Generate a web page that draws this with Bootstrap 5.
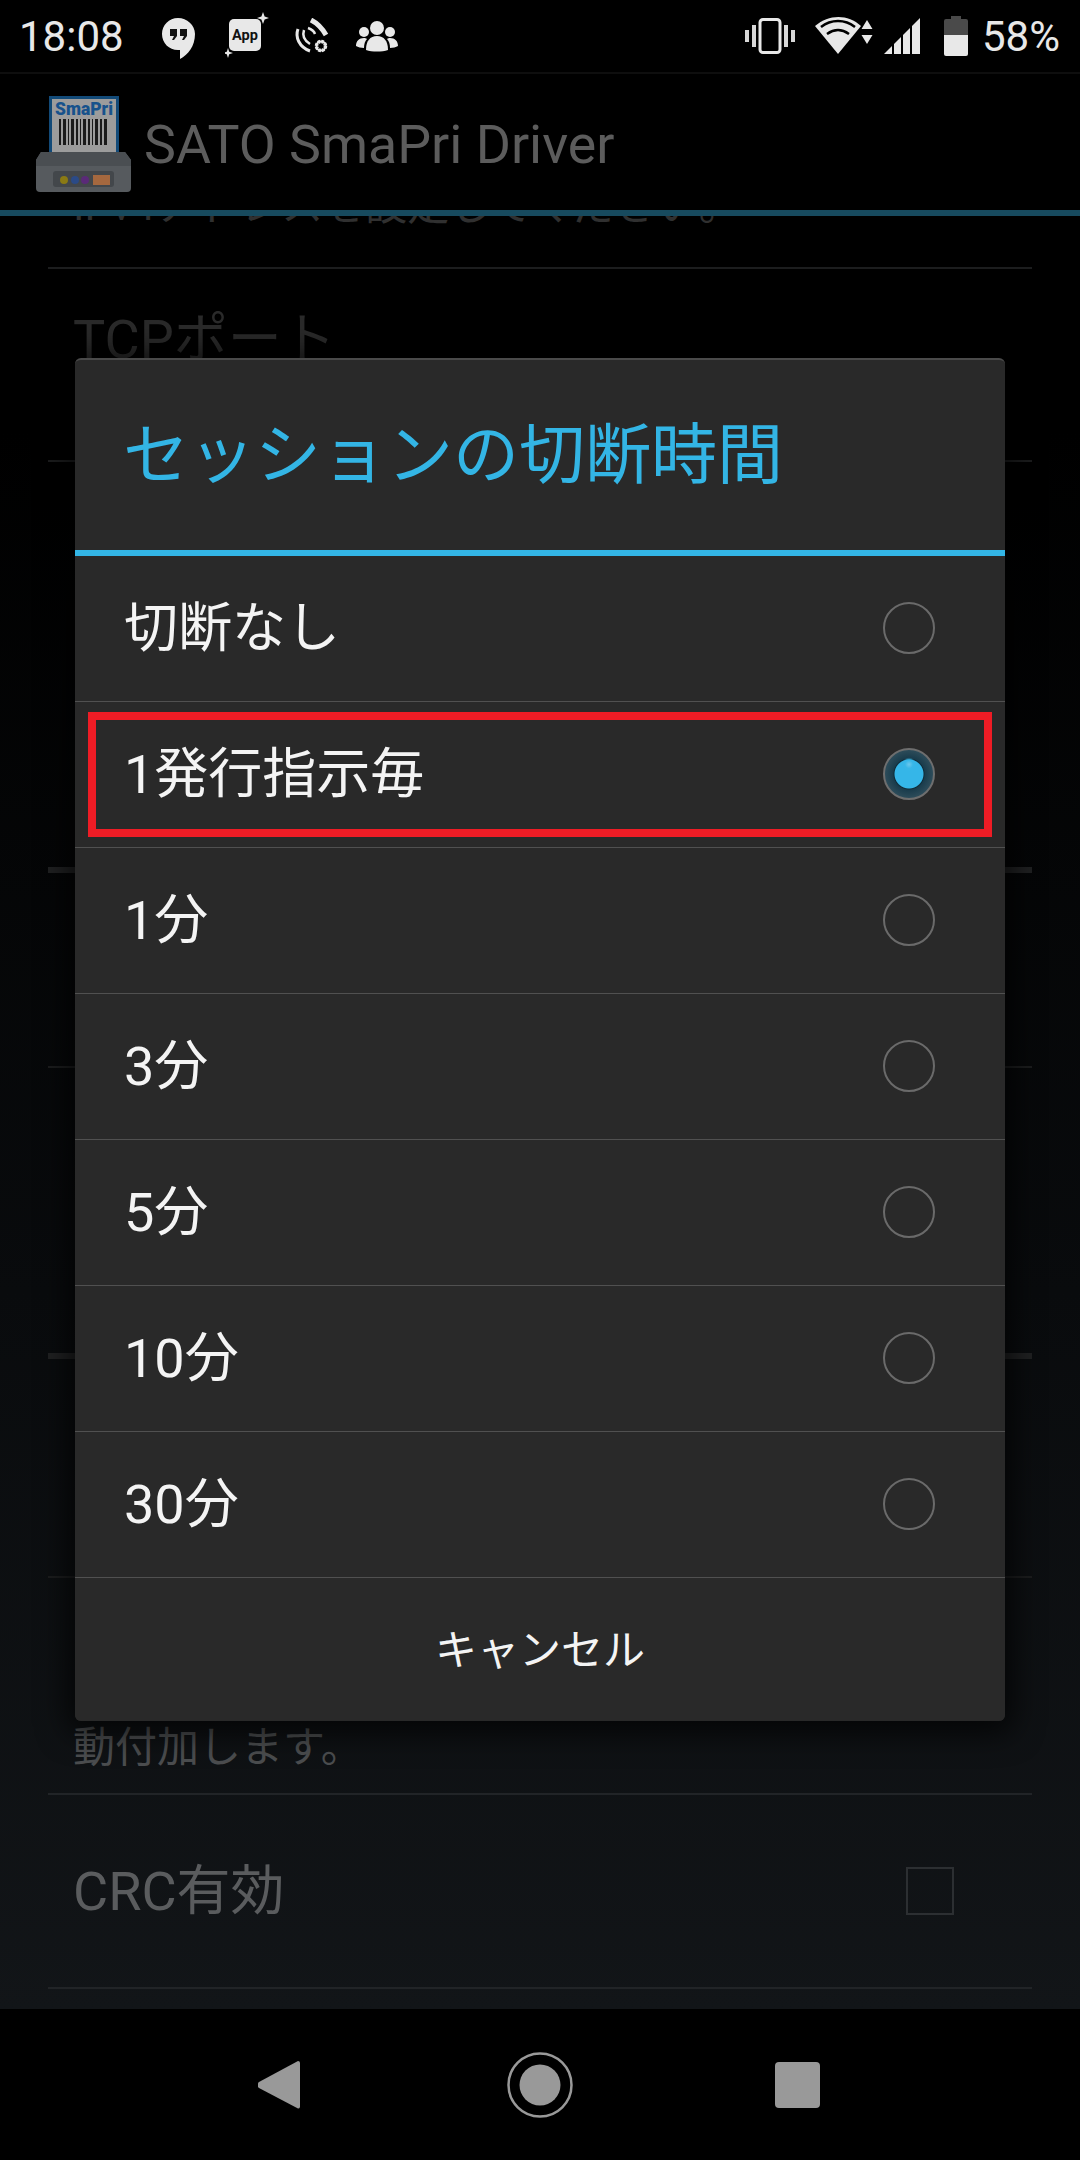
<!DOCTYPE html>
<html lang="ja">
<head>
    <meta charset="UTF-8">
    <meta name="viewport" content="width=device-width, initial-scale=1.0">
    <title>SATO SmaPri Driver</title>
    <link rel="stylesheet" href="https://cdn.jsdelivr.net/npm/bootstrap@5.3.0/dist/css/bootstrap.min.css">
    <style>
        body { background: #000; font-family: Roboto, "Noto Sans CJK JP", sans-serif; }
        .phone { width: 1080px; height: 2160px; background: #000; }

        .status-bar { height: 74px; border-bottom: 2px solid #0e0e0e; padding: 0 20px; color: #e8e8e8; font-size: 42px; line-height: 1; }
        .status-bar svg { display: block; flex: none; }
        .clock { width: 140px; margin-top: 2px; margin-left: -1px; }
        .pct { margin-left: 14px; margin-top: 2px; }
        .ic-hang { width: 40px; margin-top: 4px; }
        .ic-app { width: 44px; margin-left: 26px; }
        .ic-call { width: 36px; margin-left: 24px; }
        .ic-group { width: 42px; margin-left: 27px; }
        .ic-vib { width: 50px; }
        .ic-wifi { width: 60px; margin-left: 20px; }
        .ic-sig { width: 36px; margin-left: 9px; }
        .ic-bat { width: 24px; margin-left: 24px; }

        .action-bar { height: 142px; border-bottom: 6px solid #174a5e; padding-left: 35px; }
        .action-bar svg { margin-top: 4px; }
        .app-title { margin-left: 13px; margin-top: 6px; font-size: 53.7px; color: #5c5c5c; line-height: 1; }

        .settings { height: 1793px; background: linear-gradient(180deg, #000 0%, #000 12%, #090b0d 60%, #121518 100%); padding: 0 48px; }
        .scroll-list { margin-top: -40px; }
        .pref { border-bottom: 2px solid #1c1d1e; padding-left: 25px; }
        .pref-thick { border-bottom: 6px solid #202122; }
        .pref-hint { height: 93px; padding-top: 6px; font-size: 42px; line-height: 48px; color: #303030; }
        .pref-tcp { height: 193px; padding-top: 40px; font-size: 54px; line-height: 62px; color: #2a2a2a; }
        .pref-h1 { height: 411px; }
        .pref-h2 { height: 195px; }
        .pref-h3 { height: 291px; }
        .pref-h4 { height: 219px; }
        .pref-note { height: 217px; padding-bottom: 21px; font-size: 42px; line-height: 48px; color: #4b4d4f; border-color: #212427; }
        .pref-crc { height: 194px; padding-right: 78px; font-size: 54px; color: #5a5c5e; border-color: #212427; }
        .pref-box[type=checkbox] { width: 48px; height: 48px; margin: 0; background-color: transparent; border: 2px solid #2c2f32; border-radius: 0; }

        .nav-bar { height: 151px; background: #000; padding-left: 258px; }
        .nav-home { margin-left: 207px; }
        .nav-recent { margin-left: 202px; }

        .time-dialog { left: 75px; top: 358px; width: 930px; background: #292929; border-radius: 6px; border-top: 2px solid #4a4a4a; box-shadow: 0 4px 30px 8px rgba(0, 0, 0, .7); overflow: hidden; }
        .dialog-title { height: 196px; padding-left: 48px; padding-top: 2px; font-size: 66px; line-height: 1; color: #33b5e5; border-bottom: 6px solid #33b5e5; }
        .time-row { height: 146px; padding: 0 70px 0 49px; background: #292929; color: #f4f4f4; font-size: 54px; border: 0; border-bottom: 2px solid #505050; border-radius: 0 !important; }
        .time-row.list-group-item:last-child { border-bottom: 0; }
        .cancel-row { height: 143px; padding: 2px 0 0; justify-content: center; font-size: 42px; text-align: center; }
        .cancel-row:hover { background: #292929; color: #f4f4f4; }
        .mark-box { position: absolute; top: 10px; right: 13px; bottom: 10px; left: 13px; border: 8px solid #ee1c25; pointer-events: none; }
        .pick-radio { flex: none; width: 52px; height: 52px; margin: -2px 0 0; background-color: transparent; border: 2px solid #6a6a6a; }
        .pick-radio:checked[type=radio] { background-color: transparent; border-color: #6e6e6e; background-image: radial-gradient(circle at 50% 30%, #6cc8ec 0, #38b7e8 4px, rgba(56, 183, 232, 0) 7px), radial-gradient(circle at 50% 50%, #35b6e8 0, #35b6e8 14px, #0f2a36 15px, #1a3c4c 16px, #2d4c5a 24px); }
    </style>
</head>
<body>
    <div class="phone position-relative overflow-hidden d-flex flex-column">

        <div class="status-bar d-flex align-items-center">
            <div class="clock">18:08</div>
            <svg class="ic-hang" height="44" viewBox="0 0 40 44">
                <path d="M19 2C10 2 3 9 3 18s7 16 16 16h2v9c8-4 15-13 15-25C36 9 28 2 19 2z" fill="#e8e8e8"/>
                <path d="M11 13h7v7l-3 4h-2l2-4h-4zM21 13h7v7l-3 4h-2l2-4h-4z" fill="#111"/>
            </svg>
            <svg class="ic-app" height="48" viewBox="0 0 44 48">
                <rect x="4" y="7" width="32" height="32" rx="5" fill="#e8e8e8"/>
                <text x="20" y="28" text-anchor="middle" font-family="Roboto, sans-serif" font-weight="700" font-size="14.5" fill="#111">App</text>
                <path d="M38 0l1.600 4.400L44 6l-4.400 1.600L38 12l-1.600-4.400L32 6l4.400-1.600zM3 36l1.200 3.800L8 41l-3.800 1.200L3 46l-1.200-3.800L-2 41l3.800-1.200z" fill="#e8e8e8"/>
            </svg>
            <svg class="ic-call" height="36" viewBox="0 0 36 36" fill="none" stroke="#e8e8e8">
                <path d="M18 2c6 3 11 8 15 15" stroke-width="5"/>
                <path d="M5 11c-3 8 1 18 12 22" stroke-width="3"/>
                <path d="M11 12c-2 6 1 11 6 14" stroke-width="2.500"/>
                <path d="M15 10c3 1 6 3 7 6" stroke-width="2.500"/>
                <circle cx="28" cy="28" r="4.500" stroke-width="3.500" stroke-dasharray="2.500 1"/>
                <circle cx="28" cy="28" r="4.500" stroke-width="2"/>
            </svg>
            <svg class="ic-group" height="32" viewBox="0 0 42 32" fill="#e8e8e8">
                <circle cx="21" cy="8" r="7"/>
                <circle cx="8" cy="12" r="5"/>
                <circle cx="34" cy="12" r="5"/>
                <path d="M10 30c0-9 4-14 11-14s11 5 11 14c-6 2-16 2-22 0z"/>
                <path d="M0 26c0-5 3-8 8-8 1 0 2 0 3 1-2 2-3 5-3 9-3 0-6-1-8-2zM42 26c0-5-3-8-8-8-1 0-2 0-3 1 2 2 3 5 3 9 3 0 6-1 8-2z"/>
            </svg>

            <div class="ms-auto d-flex align-items-center">
                <svg class="ic-vib" height="36" viewBox="0 0 50 36">
                    <rect x="15" y="1.500" width="20" height="33" rx="3" fill="none" stroke="#e8e8e8" stroke-width="3"/>
                    <path d="M0 12h4v12H0zM7 7h4v22H7zM39 7h4v22h-4zM46 12h4v12h-4z" fill="#d8d8d8"/>
                </svg>
                <svg class="ic-wifi" height="38" viewBox="0 0 60 38">
                    <path d="M0 9C14-3 33-3 46 9L23 37z" fill="#e8e8e8"/>
                    <path d="M6 10c10-8 24-8 34 0M12 17c7-5 15-5 22 0" fill="none" stroke="#000" stroke-width="2.500"/>
                    <path d="M52 3l5.500 9h-11zM52 27l5.500-9h-11z" fill="#e8e8e8"/>
                </svg>
                <svg class="ic-sig" height="36" viewBox="0 0 36 36">
                    <path d="M36 0v36H0z" fill="#e8e8e8"/>
                    <path d="M9 24v12M18 16v20M27 8v28" stroke="#000" stroke-width="2"/>
                </svg>
                <svg class="ic-bat" height="40" viewBox="0 0 24 40">
                    <path d="M7 0h10v3h5a2 2 0 0 1 2 2v14H0V5a2 2 0 0 1 2-2h5z" fill="#4a4a4a"/>
                    <path d="M0 19h24v19a2 2 0 0 1-2 2H2a2 2 0 0 1-2-2z" fill="#e8e8e8"/>
                </svg>
                <div class="pct">58%</div>
            </div>
        </div>

        <div class="action-bar d-flex align-items-center">
            <svg width="96" height="96" viewBox="0 0 96 96">
                <path d="M6 56h84l6 8v28a4 4 0 0 1-4 4H5a4 4 0 0 1-4-4V64z" fill="#565a5e"/>
                <path d="M6 56h84l6 8v6H1v-6z" fill="#4a4e52"/>
                <rect x="14" y="0" width="70" height="56" fill="#124a78"/>
                <rect x="17" y="3" width="64" height="53" fill="#9c9c9c"/>
                <text x="49" y="19" text-anchor="middle" textLength="58" lengthAdjust="spacingAndGlyphs" font-family="Roboto, sans-serif" font-weight="900" font-size="19" fill="#17528c">SmaPri</text>
                <path d="M24 23h2v26h-2zM28 23h3v26h-3zM33 23h1v26h-1zM36 23h3v26h-3zM41 23h2v26h-2zM45 23h1v26h-1zM48 23h3v26h-3zM53 23h2v26h-2zM57 23h1v26h-1zM60 23h3v26h-3zM65 23h2v26h-2zM69 23h3v26h-3z" fill="#1b1b1b"/>
                <rect x="18" y="75" width="61" height="16" rx="3" fill="#43474b"/>
                <circle cx="29" cy="84" r="4" fill="#8a7a14"/>
                <circle cx="40" cy="84" r="4" fill="#2b4a86"/>
                <circle cx="50" cy="84" r="4" fill="#5a2a78"/>
                <rect x="58" y="79" width="17" height="10" fill="#a5683f"/>
            </svg>
            <div class="app-title">SATO SmaPri Driver</div>
        </div>

        <div class="settings overflow-hidden">
            <div class="scroll-list d-flex flex-column">
                <div class="pref pref-hint text-nowrap">IPv4アドレスを設定してください。</div>
                <div class="pref pref-tcp">TCPポート</div>
                <div class="pref pref-thick pref-h1"></div>
                <div class="pref pref-h2"></div>
                <div class="pref pref-thick pref-h3"></div>
                <div class="pref pref-h4"></div>
                <div class="pref pref-note d-flex align-items-end">動付加します。</div>
                <div class="pref pref-crc d-flex align-items-center justify-content-between">
                    <span>CRC有効</span>
                    <input class="form-check-input pref-box" type="checkbox" aria-label="CRC有効">
                </div>
            </div>
        </div>

        <div class="nav-bar d-flex align-items-center">
            <svg width="42" height="48" viewBox="0 0 42 48"><path d="M40 0a2 2 0 0 1 2 2v44a2 2 0 0 1-2 1.500L1 27a4 4 0 0 1 0-6z" fill="#999"/></svg>
            <svg class="nav-home" width="66" height="66" viewBox="0 0 66 66"><circle cx="33" cy="33" r="31.500" fill="none" stroke="#999" stroke-width="2.500"/><circle cx="33" cy="33" r="20.500" fill="#999"/></svg>
            <svg class="nav-recent" width="45" height="46" viewBox="0 0 45 46"><rect width="45" height="46" rx="4" fill="#999"/></svg>
        </div>

        <div class="time-dialog position-absolute">
            <div class="dialog-title d-flex align-items-center">セッションの切断時間</div>
            <div class="list-group list-group-flush">
                <label class="list-group-item time-row d-flex align-items-center justify-content-between">切断なし<input class="form-check-input pick-radio" type="radio" name="cut"></label>
                <label class="list-group-item time-row d-flex align-items-center justify-content-between position-relative">1発行指示毎<input class="form-check-input pick-radio" type="radio" name="cut" checked><span class="mark-box"></span></label>
                <label class="list-group-item time-row d-flex align-items-center justify-content-between">1分<input class="form-check-input pick-radio" type="radio" name="cut"></label>
                <label class="list-group-item time-row d-flex align-items-center justify-content-between">3分<input class="form-check-input pick-radio" type="radio" name="cut"></label>
                <label class="list-group-item time-row d-flex align-items-center justify-content-between">5分<input class="form-check-input pick-radio" type="radio" name="cut"></label>
                <label class="list-group-item time-row d-flex align-items-center justify-content-between">10分<input class="form-check-input pick-radio" type="radio" name="cut"></label>
                <label class="list-group-item time-row d-flex align-items-center justify-content-between">30分<input class="form-check-input pick-radio" type="radio" name="cut"></label>
                <button type="button" class="list-group-item list-group-item-action time-row cancel-row d-flex align-items-center">キャンセル</button>
            </div>
        </div>
    </div>
    <script src="https://cdn.jsdelivr.net/npm/bootstrap@5.3.0/dist/js/bootstrap.bundle.min.js"></script>
</body>
</html>
